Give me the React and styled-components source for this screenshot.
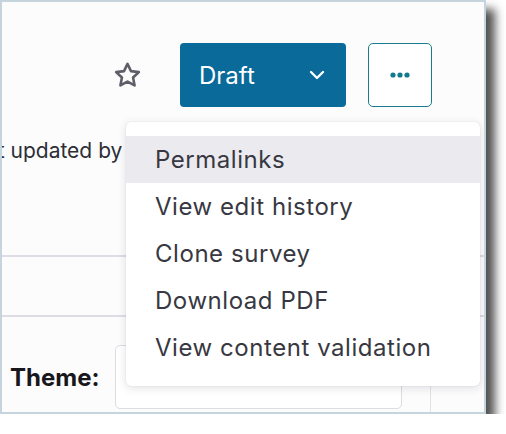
import React from 'react';
import styled, { createGlobalStyle } from 'styled-components';

const GlobalStyle = createGlobalStyle`
  html, body {
    margin: 0;
    padding: 0;
    background: #ffffff;
  }
  body {
    font-family: Inter, "Noto Sans", sans-serif;
  }
`;

const Window = styled.div`
  position: relative;
  width: 482px;
  height: 410px;
  border: 2px solid #c6d4de;
  background: #fcfcfd;
  box-shadow: 9px 9px 9px rgba(0, 0, 0, 0.68);
  overflow: hidden;
`;

const Header = styled.div`
  display: flex;
  justify-content: flex-end;
  align-items: center;
  padding: 41px 52px 0 0;
`;

const StarButton = styled.button`
  display: flex;
  align-items: center;
  justify-content: center;
  width: 32px;
  height: 32px;
  padding: 0;
  margin-right: 37px;
  border: none;
  background: transparent;
  color: #5e5e68;
`;

const StatusButton = styled.button`
  display: flex;
  align-items: center;
  justify-content: space-between;
  width: 166px;
  height: 64px;
  padding: 0 20px 0 19px;
  border: none;
  border-radius: 4px;
  background: #0a6a9a;
  color: #ffffff;
  font-family: Inter, sans-serif;
  font-size: 24px;
  margin-right: 22px;
`;

const MoreButton = styled.button`
  display: flex;
  align-items: center;
  justify-content: center;
  width: 64px;
  height: 64px;
  padding: 0;
  border: 1px solid #1a7b8f;
  border-radius: 5px;
  background: #ffffff;
`;

const Meta = styled.div`
  height: 150px;
  padding-top: 31px;
  box-sizing: border-box;
  border-bottom: 2px solid #dedce5;
  font-size: 21px;
  color: #2e2e36;
  white-space: nowrap;
`;

const MetaText = styled.span`
  display: inline-block;
  margin-left: -39px;
`;

const Band = styled.div`
  height: 58px;
  border-bottom: 2px solid #dedce5;
`;

const FormRow = styled.div`
  display: grid;
  grid-template-columns: 429px 1fr;
  height: 96px;
`;

const Field = styled.div`
  display: flex;
  align-items: center;
  padding: 24px 0 0 8px;
  box-sizing: border-box;
  border-right: 1px solid #e2e1e8;
`;

const Label = styled.label`
  font-size: 24px;
  font-weight: 700;
  color: #17171c;
  width: 105px;
`;

const Input = styled.div`
  width: 287px;
  height: 64px;
  border: 1px solid #dcdce3;
  border-radius: 5px;
  background: #ffffff;
  box-sizing: border-box;
`;

const Menu = styled.ul`
  position: absolute;
  left: 124px;
  top: 120px;
  width: 354px;
  margin: 0;
  padding: 14px 0 15px;
  list-style: none;
  background: #ffffff;
  border-radius: 5px;
  box-shadow: 0 2px 10px rgba(40, 40, 60, 0.14), 0 0 1px rgba(40, 40, 60, 0.2);
`;

const MenuItem = styled.li`
  height: 47px;
  display: flex;
  align-items: center;
  padding-left: 29px;
  font-size: 24px;
  letter-spacing: 0.55px;
  color: #383842;
  background: ${p => (p.active ? '#ebebef' : 'transparent')};
`;

const StarIcon = () => (
  <svg width="31" height="31" viewBox="0 0 24 24" fill="none" stroke="currentColor" strokeWidth="2" strokeLinejoin="round">
    <path d="M12 3l2.7 5.6 6.1.8-4.5 4.2 1.2 6.1L12 16.7l-5.5 3 1.2-6.1-4.5-4.2 6.1-.8z" />
  </svg>
);

const ChevronIcon = () => (
  <svg width="18" height="12" viewBox="0 0 18 12" fill="none" stroke="#ffffff" strokeWidth="2.4" strokeLinecap="round" strokeLinejoin="round">
    <path d="M3 3l6 6 6-6" />
  </svg>
);

const DotsIcon = () => (
  <svg width="20" height="6" viewBox="0 0 20 6" fill="#137a8c">
    <circle cx="3" cy="3" r="2.6" />
    <circle cx="10" cy="3" r="2.6" />
    <circle cx="17" cy="3" r="2.6" />
  </svg>
);

const menuItems = [
  'Permalinks',
  'View edit history',
  'Clone survey',
  'Download PDF',
  'View content validation',
];

export default function App() {
  return (
    <>
      <GlobalStyle />
      <Window>
        <Header>
          <StarButton aria-label="Favourite">
            <StarIcon />
          </StarButton>
          <StatusButton>
            Draft
            <ChevronIcon />
          </StatusButton>
          <MoreButton aria-label="More actions">
            <DotsIcon />
          </MoreButton>
        </Header>
        <Meta>
          <MetaText>Last updated by</MetaText>
        </Meta>
        <Band />
        <FormRow>
          <Field>
            <Label>Theme:</Label>
            <Input />
          </Field>
          <div />
        </FormRow>
        <Menu>
          {menuItems.map((item, i) => (
            <MenuItem key={item} active={i === 0}>
              {item}
            </MenuItem>
          ))}
        </Menu>
      </Window>
    </>
  );
}
